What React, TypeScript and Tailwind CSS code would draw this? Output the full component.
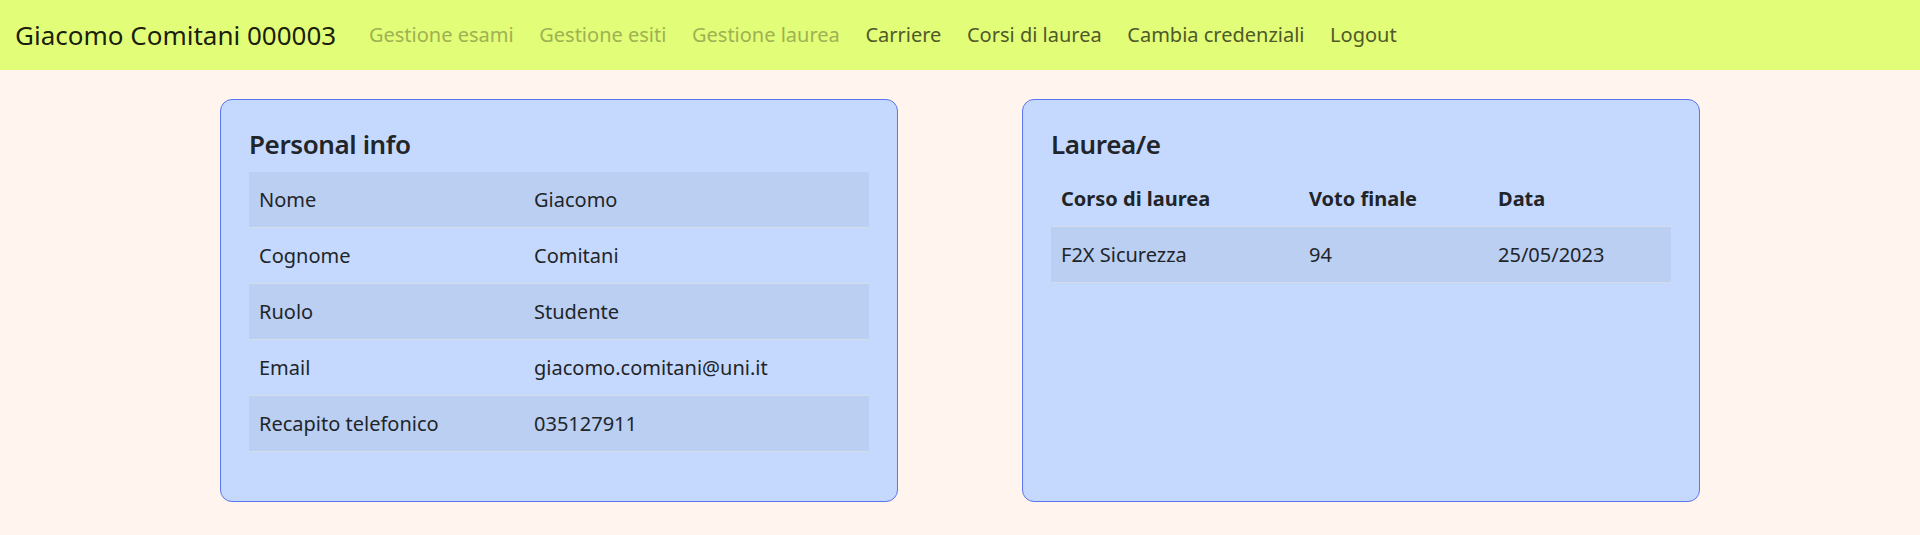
const font = { fontFamily: '"Noto Sans", "Open Sans", sans-serif' };

const personal = [
  ["Nome", "Giacomo"],
  ["Cognome", "Comitani"],
  ["Ruolo", "Studente"],
  ["Email", "giacomo.comitani@uni.it"],
  ["Recapito telefonico", "035127911"],
];

const links = [
  { label: "Gestione esami", disabled: true },
  { label: "Gestione esiti", disabled: true },
  { label: "Gestione laurea", disabled: true },
  { label: "Carriere", disabled: false },
  { label: "Corsi di laurea", disabled: false },
  { label: "Cambia credenziali", disabled: false },
  { label: "Logout", disabled: false },
];

export default function App() {
  return (
    <div className="min-h-[535px] bg-[#fff5ee] text-[#212529]" style={font}>
      <nav className="flex h-[70px] items-center bg-[#e2fd77] px-[15px]">
        <span className="mr-[20px] text-[26px] text-[rgba(0,0,0,0.9)]">Giacomo Comitani 000003</span>
        <ul className="flex items-center">
          {links.map((l) => (
            <li key={l.label}>
              <a
                href="#"
                className={
                  "block px-[12.8px] text-[20px] " +
                  (l.disabled ? "text-[#9eb153]" : "text-[#4f592a]")
                }
              >
                {l.label}
              </a>
            </li>
          ))}
        </ul>
      </nav>

      <main className="flex gap-[124px] px-[220px] pt-[29px]">
        <section className="w-[678px] rounded-[12px] border border-[#5b74ef] bg-[#c5d9fe] px-[28px] pt-[26px] pb-[49px]">
          <h4 className="mb-[10px] text-[26px] font-semibold leading-[36px] tracking-[-0.4px]">Personal info</h4>
          <div className="text-[20px]">
            {personal.map(([k, v], i) => (
              <div
                key={k}
                className={
                  "grid h-[56px] grid-cols-[275px_1fr] items-center border-b border-[#d6dce6] px-[10px] " +
                  (i % 2 === 0 ? "bg-[#bbcff3]" : "")
                }
              >
                <span>{k}</span>
                <span>{v}</span>
              </div>
            ))}
          </div>
        </section>

        <section className="w-[678px] rounded-[12px] border border-[#5b74ef] bg-[#c5d9fe] px-[28px] pt-[26px] pb-[49px]">
          <h4 className="mb-[10px] text-[26px] font-semibold leading-[36px] tracking-[-0.4px]">Laurea/e</h4>
          <div className="text-[20px]">
            <div className="grid h-[55px] grid-cols-[248px_189px_1fr] items-center border-b border-[#d6dce6] px-[10px] font-bold">
              <span>Corso di laurea</span>
              <span>Voto finale</span>
              <span>Data</span>
            </div>
            <div className="grid h-[56px] grid-cols-[248px_189px_1fr] items-center border-b border-[#d6dce6] bg-[#bbcff3] px-[10px]">
              <span>F2X Sicurezza</span>
              <span>94</span>
              <span>25/05/2023</span>
            </div>
          </div>
        </section>
      </main>
    </div>
  );
}
